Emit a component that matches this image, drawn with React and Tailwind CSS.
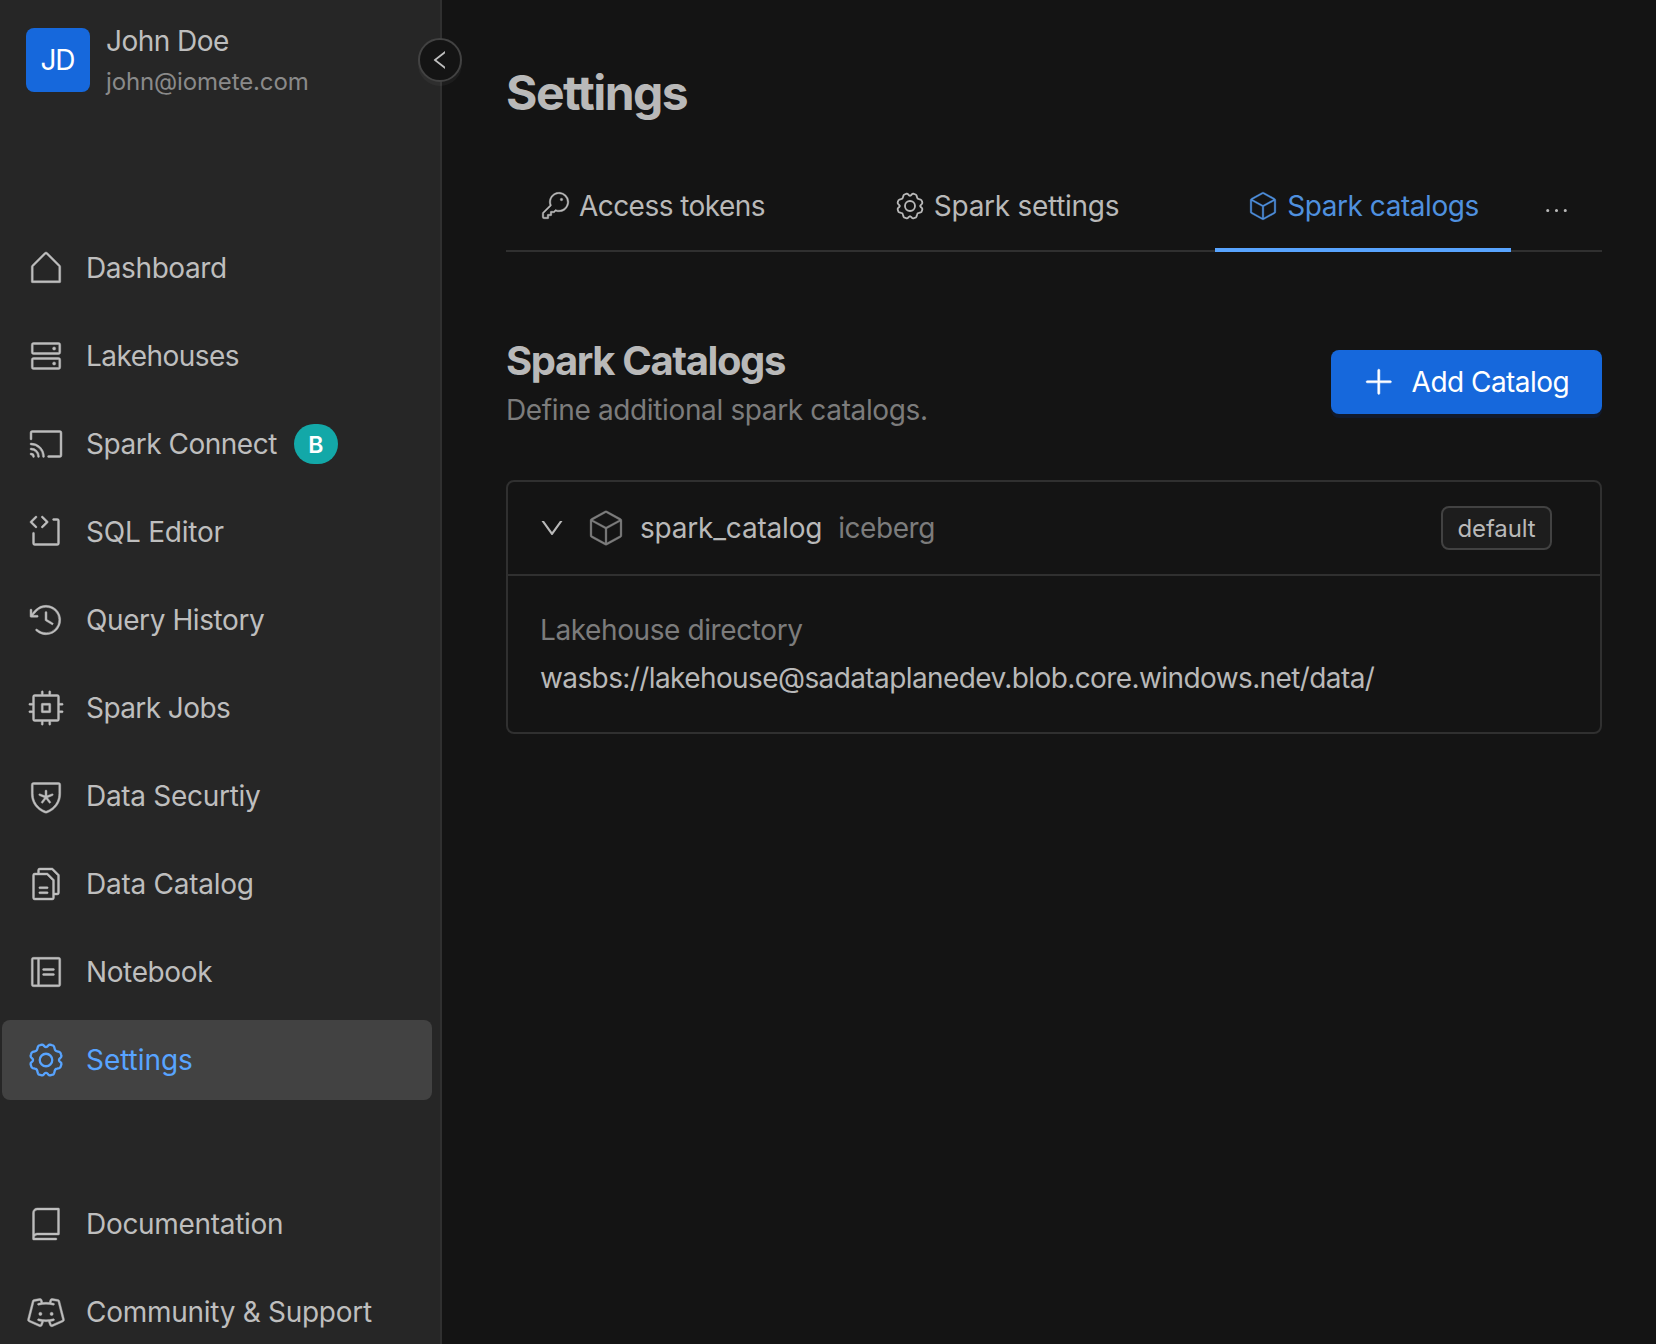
import {
  PiHouseSimpleLight, PiHardDrivesLight, PiScreencastLight, PiCodeBlockLight,
  PiClockCounterClockwiseLight, PiCpuLight, PiShieldStarLight, PiFilesLight,
  PiNotebookLight, PiBookLight, PiDiscordLogoLight, PiKeyLight,
  PiCubeLight, PiPlus, PiDotsThree,
} from 'react-icons/pi';
import { AiOutlineLeft, AiOutlineDown } from 'react-icons/ai';

const gearQuarter =
  'M0 -85C6 -85 11 -89 15 -95Q20 -102 27 -101L38 -98Q50 -96 53 -87L57 -73Q59 -59 73 -57L87 -53Q96 -50 98 -38L101 -27Q102 -20 95 -15C89 -11 85 -6 85 0';

function Gear({ className }) {
  return (
    <svg viewBox="-131 -131 262 262" className={className} fill="none" strokeLinecap="round" strokeLinejoin="round">
      <g stroke="currentColor" strokeWidth="15">
        <circle r="41" />
        {[0, 90, 180, 270].map((a) => <path key={a} d={gearQuarter} transform={`rotate(${a})`} />)}
      </g>
    </svg>
  );
}

const navItems = [
  { label: 'Dashboard', Icon: PiHouseSimpleLight, tracking: 'tracking-[-0.41px]' },
  { label: 'Lakehouses', Icon: PiHardDrivesLight, tracking: 'tracking-[-0.55px]' },
  { label: 'Spark Connect', Icon: PiScreencastLight, tracking: 'tracking-[-0.48px]', badge: 'B' },
  { label: 'SQL Editor', Icon: PiCodeBlockLight, tracking: 'tracking-[-0.22px]' },
  { label: 'Query History', Icon: PiClockCounterClockwiseLight, tracking: 'tracking-[-0.41px]' },
  { label: 'Spark Jobs', Icon: PiCpuLight, tracking: 'tracking-[-0.58px]' },
  { label: 'Data Securtiy', Icon: PiShieldStarLight, tracking: 'tracking-[-0.3px]' },
  { label: 'Data Catalog', Icon: PiFilesLight, tracking: 'tracking-[-0.26px]' },
  { label: 'Notebook', Icon: PiNotebookLight, tracking: 'tracking-[-0.38px]' },
  { label: 'Settings', Icon: Gear, tracking: 'tracking-[-0.05px]', active: true },
];
const footerItems = [
  { label: 'Documentation', Icon: PiBookLight, tracking: 'tracking-[-0.3px]' },
  { label: 'Community & Support', Icon: PiDiscordLogoLight, tracking: 'tracking-[-0.28px]' },
];
const tabs = [
  { label: 'Access tokens', Icon: PiKeyLight, className: 'w-[292px] mr-16 tracking-[-0.53px]' },
  { label: 'Spark settings', Icon: Gear, className: 'w-[289px] mr-16 tracking-[-0.29px]' },
  { label: 'Spark catalogs', Icon: PiCubeLight, className: 'w-[296px] tracking-[-0.44px]', active: true },
];

function NavItem({ label, Icon, tracking, badge, active }) {
  return (
    <li className={`flex h-20 items-center rounded-lg pl-6 ${active ? 'bg-[#424242] text-[#58a4ff]' : 'text-[#bebebe]'}`}>
      <Icon className="size-10 shrink-0 stroke-3" />
      <span className={`ml-5 whitespace-nowrap ${tracking}`}>{label}</span>
      {badge && (
        <span className="ml-[17px] flex h-10 w-11 items-center justify-center rounded-full bg-[#13a8a8] pt-px text-[23px] font-semibold text-white">{badge}</span>
      )}
    </li>
  );
}

export default function App() {
  return (
    <div className="flex h-[1344px] w-[1656px] overflow-hidden bg-[#141414] font-['Inter',sans-serif] text-[28px] leading-[44px] font-[440] text-[#b9b9b9]">
      <aside className="relative flex w-[442px] shrink-0 flex-col border-r-2 border-[#303030] bg-[#262626]">
        <div className="flex h-[228px] shrink-0 items-start gap-4 pt-7 pl-[26px]">
          <div className="flex size-16 items-center justify-center rounded-lg bg-[#1668dc] pr-px tracking-[-1px] text-white">JD</div>
          <div className="-mt-2 flex flex-col text-[#bebebe]">
            <span className="leading-[43px] tracking-[-0.55px]">John Doe</span>
            <span className="text-2xl leading-[38px] tracking-[-0.14px] text-[#8a8a8a]">john@iomete.com</span>
          </div>
        </div>
        <ul className="ml-0.5 flex w-[430px] shrink-0 flex-col gap-2">
          {navItems.map((i) => <NavItem key={i.label} {...i} />)}
        </ul>
        <ul className="mt-[84px] ml-0.5 flex w-[430px] shrink-0 flex-col gap-2">
          {footerItems.map((i) => <NavItem key={i.label} {...i} />)}
        </ul>
        <button className="absolute top-[38px] -right-[22px] flex size-11 items-center justify-center rounded-full border-2 border-[#424242] bg-[#141414] text-[#bebebe] shadow-[0_4px_0_rgba(255,255,255,0.04)]">
          <AiOutlineLeft className="size-6" />
        </button>
      </aside>
      <main className="flex flex-1 flex-col pr-[54px] pl-16">
        <h1 className="mt-[60px] text-5xl leading-[66px] font-[675] tracking-[-1.55px]">Settings</h1>
        <nav className="mt-[34px] flex h-[92px] items-stretch border-b-2 border-[#303030]">
          {tabs.map(({ label, Icon, className, active }) => (
            <div key={label} className={`-mb-0.5 flex items-center justify-center gap-2 border-b-4 pt-1 ${className} ${active ? 'border-[#58a4ff] text-[#4f90df]' : 'border-transparent'}`}>
              <Icon className="size-8 shrink-0 stroke-3" />
              <span className="whitespace-nowrap">{label}</span>
            </div>
          ))}
          <PiDotsThree className="mt-[34px] ml-[29px] size-[33px]" />
        </nav>
        <section className="mt-[84px] flex items-start justify-between">
          <div>
            <h2 className="-mt-px text-[40px] leading-[52px] font-[675] tracking-[-1.4px]">Spark Catalogs</h2>
            <p className="mt-px tracking-[-0.36px] text-[#7c7c7c]">Define additional spark catalogs.</p>
          </div>
          <button className="mt-3.5 flex h-16 w-[271px] items-center rounded-lg bg-[#1668dc] pl-[31px] text-white shadow-[0_4px_0_#111a2c]">
            <PiPlus className="size-[33.6px] stroke-4" />
            <span className="ml-4 tracking-[-0.53px] whitespace-nowrap">Add Catalog</span>
          </button>
        </section>
        <section className="mt-12 flex h-[254px] flex-col rounded-lg border-2 border-[#303030]">
          <header className="flex h-[94px] items-center border-b-2 border-[#303030] pr-12 pl-[30px]">
            <AiOutlineDown className="size-7" />
            <PiCubeLight className="ml-5 size-10 stroke-2 text-[#7c7c7c]" />
            <span className="ml-3.5 tracking-[-0.2px]">spark_catalog</span>
            <span className="ml-4 tracking-[-0.45px] text-[#7c7c7c]">iceberg</span>
            <span className="ml-auto flex h-11 w-[111px] items-center justify-center rounded-lg border-2 border-[#424242] bg-[#1d1d1d] pt-px text-2xl tracking-[-0.15px]">default</span>
          </header>
          <div className="flex flex-col gap-1 px-8 pt-8">
            <span className="tracking-[-0.4px] text-[#7c7c7c]">Lakehouse directory</span>
            <span className="tracking-[-0.6px]">wasbs://lakehouse@sadataplanedev.blob.core.windows.net/data/</span>
          </div>
        </section>
      </main>
    </div>
  );
}
